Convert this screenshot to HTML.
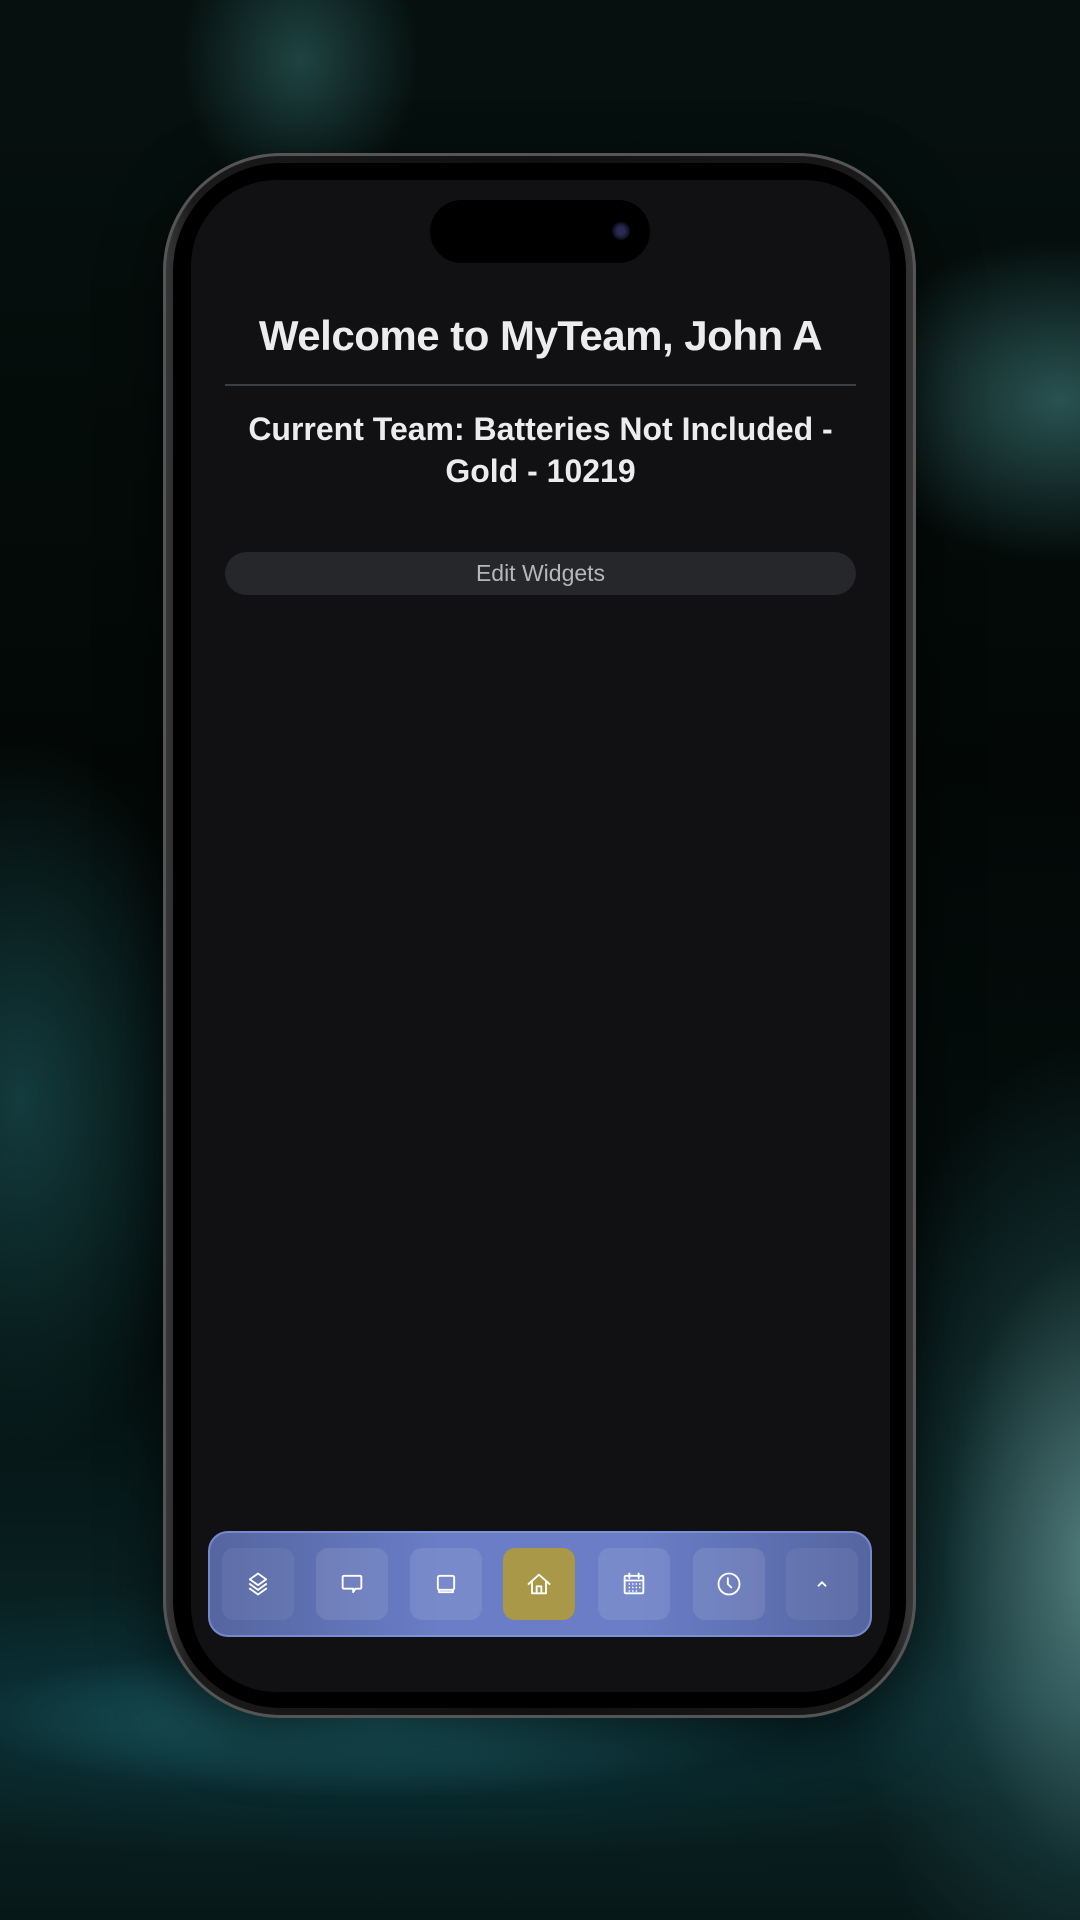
<!DOCTYPE html>
<html><head><meta charset="utf-8"><style>
html,body{margin:0;padding:0}
body{width:1080px;height:1920px;position:relative;overflow:hidden;font-family:"Liberation Sans",sans-serif;
background:
radial-gradient(ellipse 260px 520px at 1100px 1560px, rgba(110,160,160,.75), rgba(40,90,95,.3) 60%, transparent 100%),
radial-gradient(ellipse 760px 140px at 380px 1720px, rgba(40,130,140,.7), rgba(10,60,70,.35) 55%, transparent 100%),
radial-gradient(ellipse 200px 360px at 20px 1100px, rgba(30,90,95,.6), transparent 100%),
radial-gradient(ellipse 220px 160px at 1060px 400px, rgba(70,140,140,.55), transparent 100%),
radial-gradient(ellipse 120px 140px at 300px 60px, rgba(60,130,130,.45), transparent 100%),
linear-gradient(180deg,#06110f 0%,#030806 40%,#04100f 70%,#0b2628 88%,#081818 100%);}
.phone{position:absolute;left:163px;top:153px;width:753px;height:1565px;border-radius:118px;background:linear-gradient(90deg,#3a3a3c,#1a1a1a 4%,#111 50%,#1a1a1a 96%,#3a3a3c);box-shadow:0 0 0 3px #555 inset,0 20px 60px rgba(0,0,0,.6)}
.inner{position:absolute;left:10px;top:10px;right:10px;bottom:10px;border-radius:108px;background:#000}
.screen{position:absolute;left:191px;top:180px;width:699px;height:1512px;border-radius:86px;background:#111113;overflow:hidden}
.island{position:absolute;left:239px;top:20px;width:220px;height:63px;border-radius:32px;background:#000}
.cam{position:absolute;left:182px;top:22px;width:18px;height:18px;border-radius:50%;background:radial-gradient(circle,#2a2a55 30%,#0b0b18 70%)}
h1{position:absolute;left:0;right:0;top:130px;margin:0;text-align:center;color:#ececee;font-size:42px;line-height:52px;font-weight:bold;letter-spacing:-0.5px}
.hr{position:absolute;left:34px;right:34px;top:204px;height:2px;background:#3a3d42}
.sub{position:absolute;left:20px;right:20px;top:228px;text-align:center;color:#ececee;font-size:32px;font-weight:bold;line-height:42px}
.btn{position:absolute;left:34px;right:34px;top:372px;height:43px;border-radius:22px;background:#26272b;color:#b6b7bb;font-size:23px;text-align:center;line-height:43px}
.nav{position:absolute;left:17px;top:1351px;width:664px;height:106px;border-radius:20px;background:linear-gradient(90deg,#5565a0,#6a7dc6 35%,#6a7dc6 65%,#5565a0);border:2px solid rgba(140,160,230,.6);box-sizing:border-box}
.b{position:absolute;top:15px;width:72px;height:72px;border-radius:12px;background:rgba(255,255,255,.1);display:flex;align-items:center;justify-content:center}
.b svg{width:28px;height:28px;fill:none;stroke:#fff;stroke-width:1.6;stroke-linecap:round;stroke-linejoin:round}
</style></head><body>
<div class="phone"><div class="inner"></div></div>
<div class="screen">
 <div class="island"><div class="cam"></div></div>
 <h1>Welcome to MyTeam, John A</h1>
 <div class="hr"></div>
 <div class="sub">Current Team: Batteries Not Included -<br>Gold - 10219</div>
 <div class="btn">Edit Widgets</div>
 <div class="nav">
  <div class="b" style="left:12px;background:rgba(255,255,255,.06)"><svg viewBox="0 0 24 24"><path d="M12 3l7 5-7 5-7-5z"/><path d="M5 12l7 5 7-5"/><path d="M5 16l7 5 7-5"/></svg></div>
  <div class="b" style="left:106px"><svg viewBox="0 0 24 24"><path d="M5 5h14a1 1 0 0 1 1 1v9a1 1 0 0 1-1 1h-4l-2 3v-3H5a1 1 0 0 1-1-1V6a1 1 0 0 1 1-1z"/></svg></div>
  <div class="b" style="left:200px"><svg viewBox="0 0 24 24"><rect x="5" y="5" width="14" height="12" rx="1.5"/><path d="M6 17v2h12v-2"/></svg></div>
  <div class="b" style="left:293px;background:#a89848"><svg viewBox="0 0 24 24"><path d="M3 12l9-8 9 8"/><path d="M6 10v10h12V10"/><path d="M10 20v-6h4v6"/></svg></div>
  <div class="b" style="left:388px"><svg viewBox="0 0 24 24"><rect x="4" y="5" width="16" height="15" rx="1"/><path d="M4 9h16M8 3v4M16 3v4"/><path d="M8 12h0M11 12h0M14 12h0M17 12h0M8 15h0M11 15h0M14 15h0M17 15h0M8 18h0M11 18h0M14 18h0" stroke-width="1.4"/></svg></div>
  <div class="b" style="left:483px"><svg viewBox="0 0 24 24"><circle cx="12" cy="12" r="9"/><path d="M11 7v5l3 3"/></svg></div>
  <div class="b" style="left:576px;background:rgba(255,255,255,.06)"><svg viewBox="0 0 24 24"><path d="M9 13.5l3-3 3 3"/></svg></div>
 </div>
</div>
</body></html>
